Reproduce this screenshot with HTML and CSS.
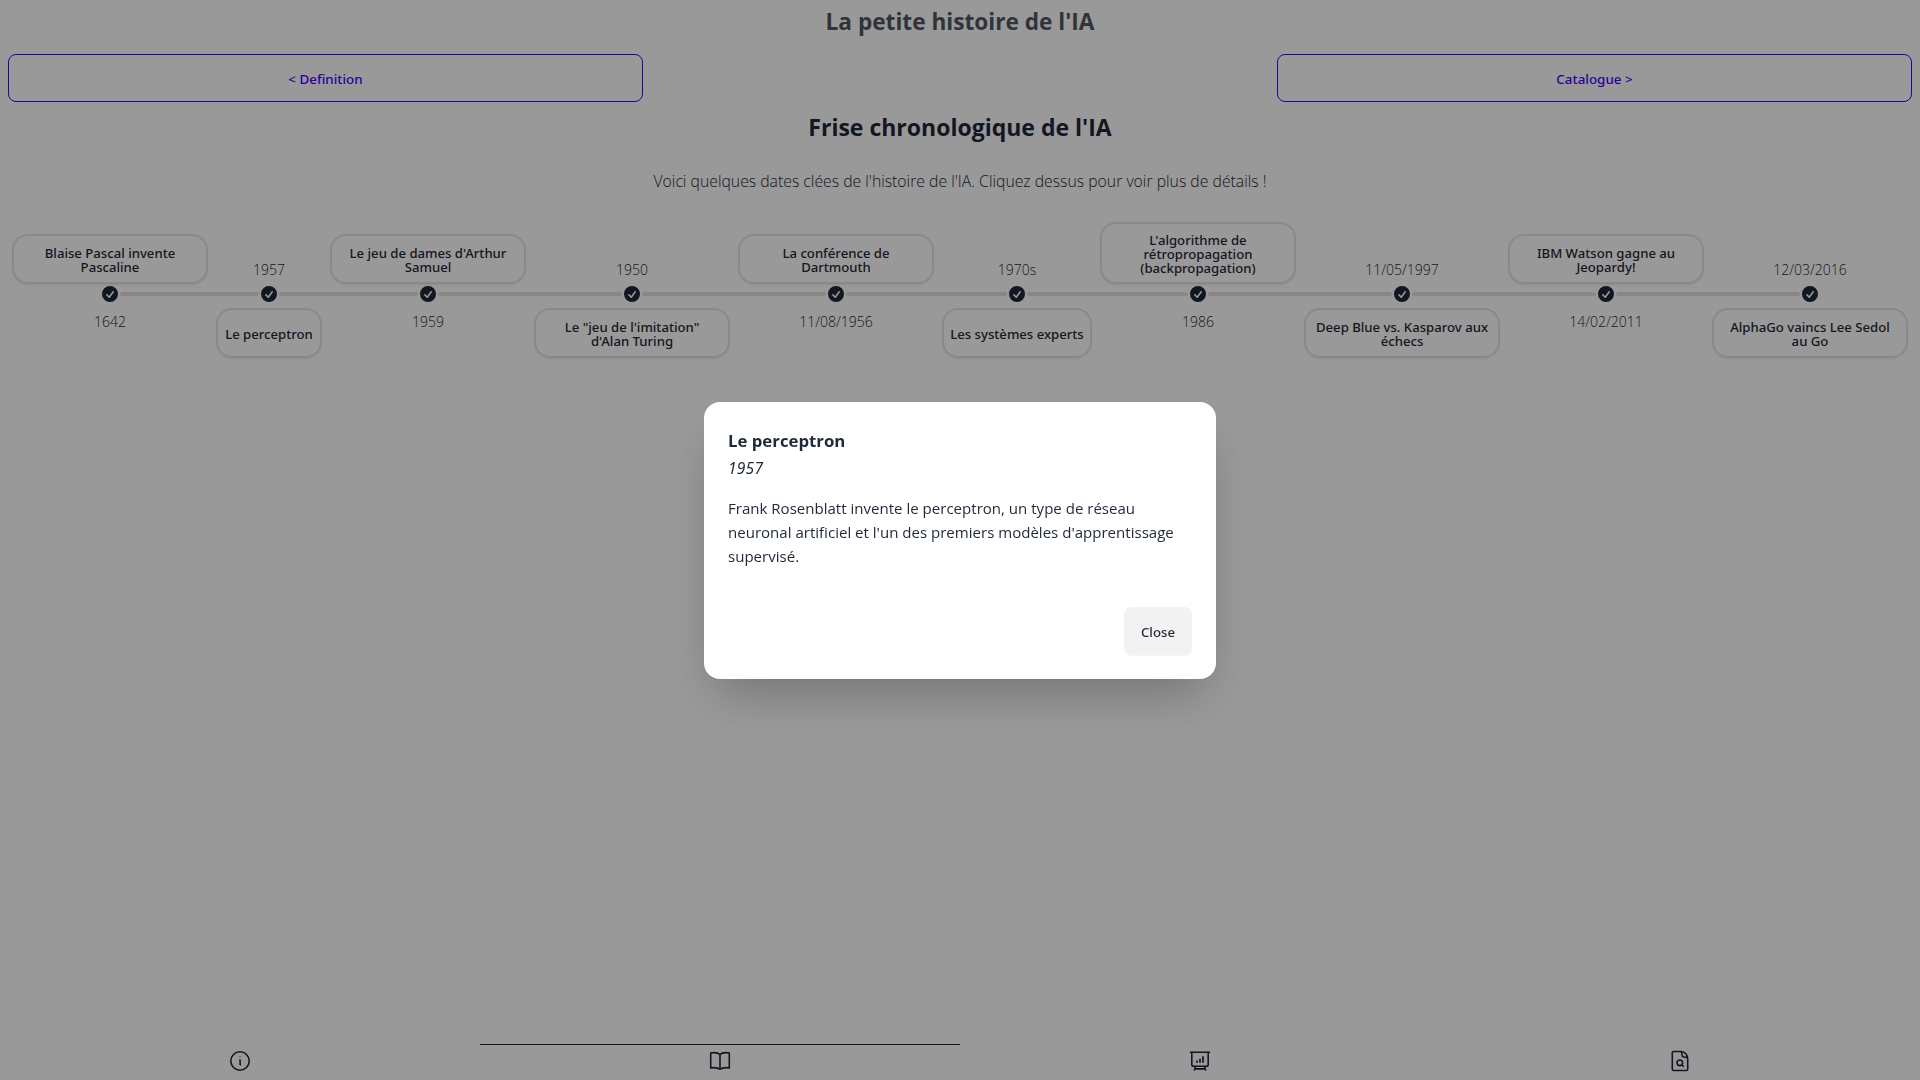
FILE: index.html
```html
<!DOCTYPE html>
<html lang="fr">
<head>
<meta charset="utf-8">
<title>La petite histoire de l'IA</title>
<link rel="stylesheet" href="styles.css">
</head>
<body>
<svg class="defs" aria-hidden="true">
  <symbol id="check" viewBox="0 0 20 20"><path fill="currentColor" fill-rule="evenodd" clip-rule="evenodd" d="M10 18a8 8 0 100-16 8 8 0 000 16zm3.857-9.809a.75.75 0 00-1.214-.882l-3.483 4.79-1.88-1.88a.75.75 0 10-1.06 1.061l2.5 2.5a.75.75 0 001.137-.089l4-5.5z"/></symbol>
</svg>
<div class="page">
  <h1 class="app-title">La petite histoire de l'IA</h1>
  <nav class="pager">
    <button class="outline-btn">&lt; Definition</button>
    <button class="outline-btn">Catalogue &gt;</button>
  </nav>
  <main class="content">
    <h2 class="heading">Frise chronologique de l'IA</h2>
    <p class="intro">Voici quelques dates clées de l'histoire de l'IA. Cliquez dessus pour voir plus de détails !</p>
    <ul class="timeline">
      <li class="event up"><span class="card">Blaise Pascal invente<br>Pascaline</span><svg class="dot"><use href="#check"/></svg><time class="date">1642</time></li>
      <li class="event down"><time class="date">1957</time><svg class="dot"><use href="#check"/></svg><span class="card">Le perceptron</span></li>
      <li class="event up"><span class="card">Le jeu de dames d'Arthur<br>Samuel</span><svg class="dot"><use href="#check"/></svg><time class="date">1959</time></li>
      <li class="event down"><time class="date">1950</time><svg class="dot"><use href="#check"/></svg><span class="card">Le "jeu de l'imitation"<br>d'Alan Turing</span></li>
      <li class="event up"><span class="card">La conférence de<br>Dartmouth</span><svg class="dot"><use href="#check"/></svg><time class="date">11/08/1956</time></li>
      <li class="event down"><time class="date">1970s</time><svg class="dot"><use href="#check"/></svg><span class="card">Les systèmes experts</span></li>
      <li class="event up"><span class="card">L'algorithme de<br>rétropropagation<br>(backpropagation)</span><svg class="dot"><use href="#check"/></svg><time class="date">1986</time></li>
      <li class="event down"><time class="date">11/05/1997</time><svg class="dot"><use href="#check"/></svg><span class="card">Deep Blue vs. Kasparov aux<br>échecs</span></li>
      <li class="event up"><span class="card">IBM Watson gagne au<br>Jeopardy!</span><svg class="dot"><use href="#check"/></svg><time class="date">14/02/2011</time></li>
      <li class="event down"><time class="date">12/03/2016</time><svg class="dot"><use href="#check"/></svg><span class="card">AlphaGo vaincs Lee Sedol<br>au Go</span></li>
    </ul>
  </main>
  <footer class="tabs">
    <a class="tab"><svg class="icon" viewBox="0 0 24 24"><circle cx="12" cy="12" r="9.2"/><path d="M12 7.6v.4M11.2 11h.9v5M12.1 15.8h.9"/></svg></a>
    <a class="tab active"><svg class="icon" viewBox="0 0 24 24"><path d="M12 5.3C10.5 4 8.5 3.6 6 3.6c-1.200 0-2.300.2-3.300.5v15c1-.3 2.100-.5 3.300-.5 2.500 0 4.500.6 6 1.800m0-15.100C13.500 4 15.500 3.600 18 3.600c1.200 0 2.300.2 3.300.5v15c-1-.3-2.100-.5-3.300-.5-2.500 0-4.500.6-6 1.800m0-15.100v15.100"/></svg></a>
    <a class="tab"><svg class="icon" viewBox="0 0 24 24"><path d="M1.800 3.200h20.400M3.800 3.200v12.200a1.800 1.800 0 0 0 1.800 1.800h12.800a1.800 1.800 0 0 0 1.800-1.800V3.200M7.600 17.200l-1.300 4.300M16.400 17.200l1.300 4.300M7 19.900h10"/><path class="bars" d="M9 13.700v-2.200M12 13.700V9.700M15 13.700V7.200"/></svg></a>
    <a class="tab"><svg class="icon" viewBox="0 0 24 24"><path d="M14 2.500H5.600a1.300 1.300 0 0 0-1.300 1.300v16.400a1.300 1.300 0 0 0 1.300 1.300h12.800a1.300 1.300 0 0 0 1.300-1.300V10c0-4-2.800-7.500-6.700-7.500 1.100 1 1.100 2.300 1.100 3.800 0 1 .5 1.700 1.600 1.700 2.600 0 4 .6 4 2"/><circle cx="11.800" cy="13.800" r="2.800"/><path d="M13.800 15.800l2 2"/></svg></a>
  </footer>
</div>
<div class="overlay">
  <section class="dialog">
    <h3 class="dialog-title">Le perceptron</h3>
    <em class="dialog-date">1957</em>
    <p class="dialog-text">Frank Rosenblatt invente le perceptron, un type de réseau<br>neuronal artificiel et l'un des premiers modèles d'apprentissage<br>supervisé.</p>
    <div class="actions"><button class="close">Close</button></div>
  </section>
</div>
</body>
</html>
```
FILE: styles.css
```css
* { box-sizing: border-box; }
body, h1, h2, h3, p, ul { margin: 0; padding: 0; }
body {
  font: 15.05px/24px "Open Sans", "Noto Sans", sans-serif;
  color: #1f2937;
  background: #fff;
  overflow: hidden;
}
button { font: inherit; }
.defs { display: none; }
.page { height: 100vh; display: flex; flex-direction: column; }
.app-title {
  padding: 6px 0 16px;
  font-size: 22.65px;
  line-height: 32px;
  font-weight: 700;
  text-align: center;
  color: #515862;
}
.pager { display: flex; justify-content: space-between; padding: 0 8px; }
.outline-btn {
  width: 635px;
  height: 48px;
  padding: 2px 0 0;
  background: none;
  border: 1px solid #4b00ff;
  border-radius: 8px;
  color: #4b00ff;
  font: 500 13.4px "Noto Sans", sans-serif;
}
.content { flex: 1; }
.heading {
  padding-top: 9px;
  font-size: 23px;
  line-height: 32px;
  font-weight: 700;
  text-align: center;
}
.intro {
  padding: 26px 0 29px;
  text-align: center;
  font-size: 15.78px;
  font-weight: 300;
}
.timeline {
  display: grid;
  grid-template-columns: 204px 114px 204px 204px 204px 158px repeat(4, 204px);
  padding: 0 8px;
  list-style: none;
}
.event {
  display: grid;
  grid-template-rows: 62px 20px 54px;
  justify-items: center;
  position: relative;
}
.event::before, .event::after {
  content: "";
  position: absolute;
  top: 70px;
  height: 4px;
  background: #e2e2e2;
}
.event::before { left: 0; right: calc(50% + 10px); border-radius: 0 2px 2px 0; }
.event::after { right: 0; left: calc(50% + 10px); border-radius: 2px 0 0 2px; }
.event:first-child::before, .event:last-child::after { display: none; }
.dot { width: 20px; height: 20px; }
.card {
  display: flex;
  align-items: center;
  justify-content: center;
  align-self: end;
  width: calc(100% - 8px);
  min-height: 50px;
  padding: 9px 0 7px;
  border: 2px solid #e5e5e5;
  border-radius: 16px;
  box-shadow: 0 1px 2px rgba(0, 0, 0, .07);
  text-align: center;
  font: 500 13.15px/14px "Noto Sans", sans-serif;
}
.date { font-size: 14px; line-height: 20px; font-weight: 300; }
.up .date { margin-top: 8px; }
.down .date { align-self: end; margin-bottom: 4px; }
.tabs { display: flex; height: 36px; }
.tab {
  flex: 1;
  display: flex;
  justify-content: center;
  padding-top: 4px;
  border-top: 1px solid transparent;
}
.tab.active { border-color: #1f2937; }
.icon {
  width: 24px;
  height: 24px;
  fill: none;
  stroke: currentColor;
  stroke-width: 1.6;
  stroke-linejoin: round;
}
.bars { stroke-width: 1.7; }
.overlay {
  position: fixed;
  inset: 0;
  display: grid;
  place-items: center;
  background: rgba(0, 0, 0, .4);
}
.dialog {
  width: 512px;
  height: 277px;
  padding: 24px;
  border-radius: 16px;
  background: #fff;
  box-shadow: 0 25px 50px -12px rgba(0, 0, 0, .25);
}
.dialog-title { padding-top: 1px; font-size: 16.8px; line-height: 28px; font-weight: 700; }
.dialog-date { display: block; padding-top: 1px; font: italic 15.6px/24px "Noto Sans", sans-serif; letter-spacing: .2px; }
.dialog-text { padding: 16px 0; }
.actions { display: flex; justify-content: flex-end; margin-top: 23px; }
.close {
  width: 68px;
  height: 48px;
  padding: 2px 0 0;
  border: 0;
  border-radius: 8px;
  background: #f2f2f2;
  box-shadow: 0 1px 2px rgba(0, 0, 0, .05);
  color: #1f2937;
  font: 500 13.2px "Noto Sans", sans-serif;
}
```
